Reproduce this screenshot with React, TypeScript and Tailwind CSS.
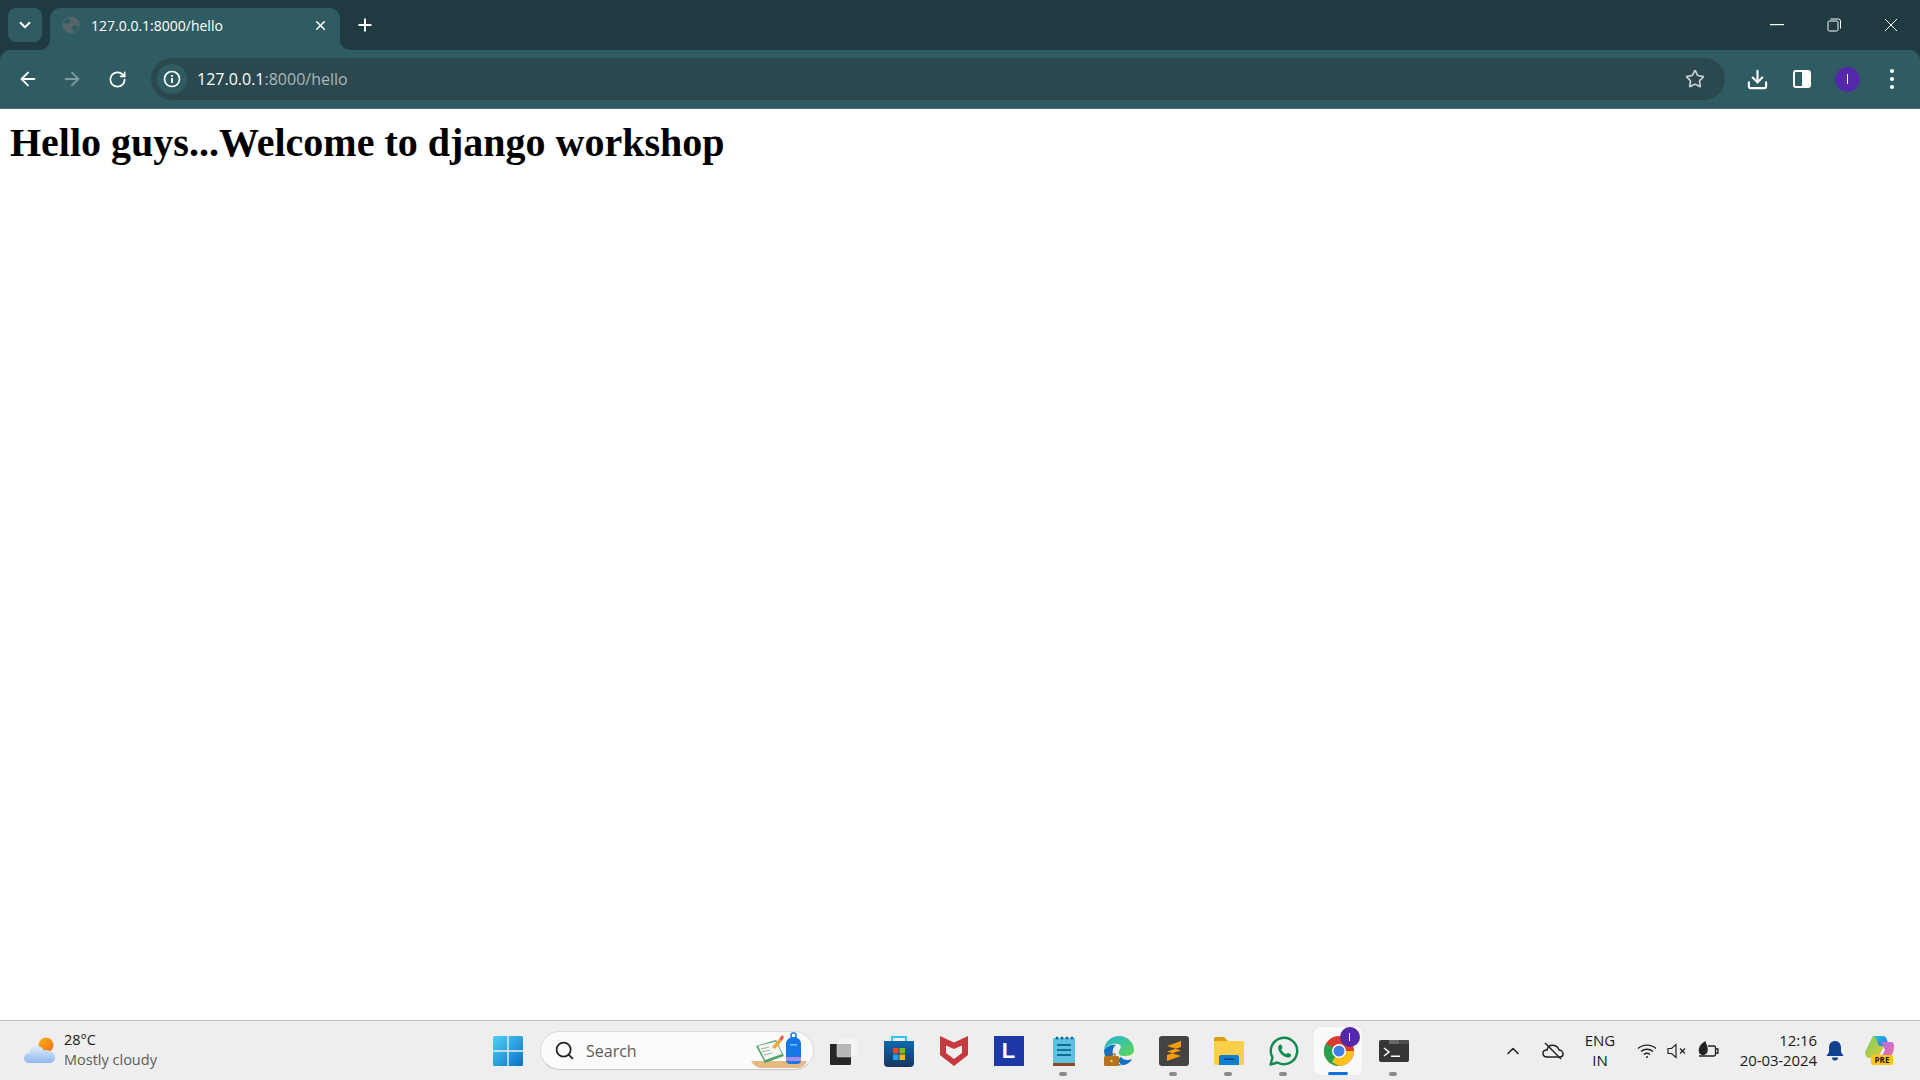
import { ChevronDown, ChevronUp, Plus, X, ArrowLeft, ArrowRight, RotateCw, Star, Download, Search } from 'lucide-react';
import type { ReactNode } from 'react';

const ui = 'font-["Open_Sans","Noto_Sans",sans-serif]';

function Flare({ side }: { side: 'left' | 'right' }) {
  return (
    <svg
      width="10"
      height="10"
      viewBox="0 0 10 10"
      className={`absolute bottom-0 ${side === 'left' ? 'left-[-10px]' : 'right-[-10px] -scale-x-100'}`}
    >
      <path d="M10 0V10H0A10 10 0 0 0 10 0Z" fill="#2f5c63" />
    </svg>
  );
}

function Globe() {
  return (
    <svg width="18" height="18" viewBox="0 0 18 18">
      <circle cx="9" cy="9" r="8.500" fill="#55666b" />
      <path d="M5 2 9 4 8 7 4 8 1.500 6ZM10 10l5-1 1.500 2-3.500 5-2-1Z" fill="#2f5c63" />
    </svg>
  );
}

function InfoIcon() {
  return (
    <svg width="18" height="18" viewBox="0 0 18 18" fill="none">
      <circle cx="9" cy="9" r="7.500" stroke="white" strokeWidth="1.700" />
      <rect x="8.100" y="8" width="1.800" height="5" fill="white" />
      <rect x="8.100" y="5" width="1.800" height="1.800" fill="white" />
    </svg>
  );
}

function TabStrip() {
  return (
    <div className="flex h-[50px] shrink-0 items-end bg-[#1f3a40] pl-2">
      <div className="mb-2 flex h-[34px] w-[34px] items-center justify-center rounded-lg bg-[#2f5c63]">
        <ChevronDown className="h-[18px] w-[18px] text-white" strokeWidth={2.500} />
      </div>
      <div className="relative ml-2 flex h-[42px] w-[290px] items-center rounded-t-[10px] bg-[#2f5c63] pr-[12px] pb-[8px] pl-[12px]">
        <Flare side="left" />
        <Flare side="right" />
        <Globe />
        <span className={`ml-[11px] flex-1 text-[14px] text-white ${ui}`}>127.0.0.1:8000/hello</span>
        <X className="h-[15px] w-[15px] text-white" strokeWidth={2.500} />
      </div>
      <div className="mb-[8px] ml-[8px] flex h-[34px] w-[34px] items-center justify-center">
        <Plus className="h-[20px] w-[20px] text-white" strokeWidth={2.400} />
      </div>
      <div className="ml-auto flex h-full items-start pr-[1px]">
        <div className="flex h-[50px] w-[57px] items-center justify-center">
          <svg width="14" height="2" viewBox="0 0 14 2">
            <rect width="14" height="1.200" fill="white" />
          </svg>
        </div>
        <div className="flex h-[50px] w-[57px] items-center justify-center">
          <svg width="14" height="14" viewBox="0 0 14 14" fill="none" stroke="white" strokeWidth="1">
            <rect x="1" y="3" width="10" height="10" rx="1.500" />
            <path d="M3.500 1H11.500A2 2 0 0 1 13.500 3V10.500" />
          </svg>
        </div>
        <div className="flex h-[50px] w-[57px] items-center justify-center">
          <svg width="14" height="14" viewBox="0 0 14 14" stroke="white" strokeWidth="1">
            <path d="M1 1 13 13M13 1 1 13" />
          </svg>
        </div>
      </div>
    </div>
  );
}

function Toolbar() {
  return (
    <div className="bg-[#1f3a40]">
      <div className="flex h-[59px] items-center rounded-t-[10px] border-b border-[#4a7379] bg-[#2f5c63] pl-[17px] pr-[12px]">
        <ArrowLeft className="h-[22px] w-[22px] text-white" strokeWidth={2} />
        <ArrowRight className="ml-[22px] h-[22px] w-[22px] text-[#7d9a9e]" strokeWidth={2} />
        <RotateCw className="ml-[25px] h-[19px] w-[19px] text-white" strokeWidth={2.200} />
        <div className="ml-[24px] flex h-[42px] w-[1574px] items-center rounded-full bg-[#2b484e] pl-[6px] pr-[20px]">
          <div className="flex h-[30px] w-[30px] items-center justify-center rounded-full bg-[#2f5c63]">
            <InfoIcon />
          </div>
          <span className={`ml-[10px] flex-1 text-[16px] text-white ${ui}`}>
            127.0.0.1<span className="text-[#a9b8bb]">:8000/hello</span>
          </span>
          <Star className="h-[20px] w-[20px] text-[#c9d1d3]" strokeWidth={2} />
        </div>
        <Download className="ml-[21px] h-[23px] w-[23px] text-white" strokeWidth={2.200} />
        <div className="ml-[24px] flex h-[18px] w-[18px] overflow-hidden rounded-[3px] border-2 border-white">
          <div className="w-[7px]" />
          <div className="flex-1 bg-white" />
        </div>
        <div className="ml-[24px] flex h-[25px] w-[25px] items-center justify-center rounded-full bg-[#5428a8]">
          <span className="h-[10px] w-px bg-white" />
        </div>
        <div className="ml-[30px] flex flex-col gap-[4px]">
          <span className="h-[4px] w-[4px] rounded-full bg-white" />
          <span className="h-[4px] w-[4px] rounded-full bg-white" />
          <span className="h-[4px] w-[4px] rounded-full bg-white" />
        </div>
      </div>
    </div>
  );
}

function WeatherIcon() {
  return (
    <svg width="32" height="28" viewBox="0 0 32 28">
      <defs>
        <linearGradient id="wsun" x1="0" y1="0" x2="1" y2="1">
          <stop offset="0" stopColor="#fbb321" />
          <stop offset="1" stopColor="#ee6f12" />
        </linearGradient>
        <linearGradient id="wcloud" x1="0" y1="0" x2="0" y2="1">
          <stop offset="0" stopColor="#e3edfb" />
          <stop offset="1" stopColor="#8fb8ef" />
        </linearGradient>
      </defs>
      <circle cx="22" cy="8" r="7.500" fill="url(#wsun)" />
      <path
        d="M5 26C2 26 0 23.500 0 21 0 18 2 16 5 15.500 6.500 11 10 8 14 9 17 9.500 19 11.500 20 13.500 22 13 25 13 27 14.500 30 15.500 31 18 31 20.500 31 23.500 29 26 26 26Z"
        fill="url(#wcloud)"
      />
    </svg>
  );
}

function WindowsLogo() {
  return (
    <svg width="30" height="30" viewBox="0 0 30 30">
      <defs>
        <linearGradient id="win" x1="0" y1="0" x2="1" y2="1">
          <stop offset="0" stopColor="#4fd2f8" />
          <stop offset="1" stopColor="#0a6fc4" />
        </linearGradient>
      </defs>
      <path d="M1.500 0H14.300V14.300H0V1.500A1.500 1.500 0 0 1 1.500 0ZM15.700 0H28.500A1.500 1.500 0 0 1 30 1.500V14.300H15.700ZM0 15.700H14.300V30H1.500A1.500 1.500 0 0 1 0 28.500ZM15.700 15.700H30V28.500A1.500 1.500 0 0 1 28.500 30H15.700Z" fill="url(#win)" />
    </svg>
  );
}

function SearchArt() {
  return (
    <svg width="60" height="38" viewBox="0 0 60 38" className="mr-[2px]">
      <path d="M0 29H56Q53 36 46 36H10Q4 36 0 29Z" fill="#e5b981" />
      <path d="M5 14 25 8 33 24 14 31Z" fill="#4fa368" />
      <path d="M7 14 25 9.500 31 22 14 28Z" fill="#f4f6f2" />
      <path d="M10 17 18 15M11 20 19 18M13 23 21 21" stroke="#9db3a6" strokeWidth="1" />
      <path d="M21 15 28 7 31 9 24 17Z" fill="#f2a73a" />
      <path d="M28 7 31 3 33 5 31 9Z" fill="#ef5a4d" />
      <path d="M35 12C35 8 38 5 42.500 5 47 5 50 8 50 12V28Q50 32 46 32H39Q35 32 35 28Z" fill="#1478ea" />
      <rect x="40" y="1" width="5" height="5" rx="2" fill="none" stroke="#1478ea" strokeWidth="1.500" />
      <rect x="35" y="25" width="15" height="4" fill="#a68be8" />
      <rect x="39" y="12" width="7" height="1.500" fill="#7bc0ff" />
    </svg>
  );
}

function TaskView() {
  return (
    <svg width="30" height="30" viewBox="0 0 30 30">
      <path d="M1 8H22V28Q22 29 21 29H2Q1 29 1 28Z" fill="#262626" />
      <rect x="8" y="1" width="22" height="20" rx="1" fill="#f5f5f5" fillOpacity="0.700" stroke="#e3e3e3" strokeWidth="0.500" />
    </svg>
  );
}

function StoreIcon() {
  return (
    <svg width="30" height="32" viewBox="0 0 30 32">
      <defs>
        <linearGradient id="store" x1="0" y1="0" x2="0" y2="1">
          <stop offset="0" stopColor="#0f68ad" />
          <stop offset="1" stopColor="#17355f" />
        </linearGradient>
      </defs>
      <path d="M8 6V2H22V6" fill="none" stroke="#2cc7ee" strokeWidth="2" />
      <path d="M0 6H30V28Q30 32 26 32H4Q0 32 0 28Z" fill="url(#store)" />
      <rect x="9" y="13" width="5.500" height="5.500" fill="#e8492f" />
      <rect x="15.500" y="13" width="5.500" height="5.500" fill="#7fba1f" />
      <rect x="9" y="19.500" width="5.500" height="5.500" fill="#1da3e8" />
      <rect x="15.500" y="19.500" width="5.500" height="5.500" fill="#fcb712" />
    </svg>
  );
}

function McAfeeIcon() {
  return (
    <svg width="28" height="30" viewBox="0 0 28 30">
      <path d="M0 0 14 6.500 28 0V19L14 30 0 19Z" fill="#c63a3f" />
      <path d="M6 9.500 14 13 22 9.500V17L14 23 6 17Z" fill="#eeeeee" />
    </svg>
  );
}

function LIcon() {
  return (
    <div className="relative flex h-[30px] w-[30px] items-center justify-center bg-[#1c39a7]">
      <span className='text-[22px] leading-none font-bold text-white font-["Liberation_Sans",sans-serif]'>L</span>
    </div>
  );
}

function NotepadIcon() {
  return (
    <svg width="22" height="30" viewBox="0 0 22 30">
      <rect x="0" y="2" width="22" height="26" rx="1" fill="#5fc1e2" />
      <rect x="0" y="27" width="22" height="3" fill="#8a4a22" />
      <circle cx="4" cy="2" r="1.500" fill="#0e6f93" />
      <circle cx="9" cy="2" r="1.500" fill="#0e6f93" />
      <circle cx="14" cy="2" r="1.500" fill="#0e6f93" />
      <circle cx="19" cy="2" r="1.500" fill="#0e6f93" />
      <path d="M4 9H18M4 14H18M4 19H18" stroke="#0e6f93" strokeWidth="2" />
    </svg>
  );
}

function EdgeIcon() {
  return (
    <svg width="30" height="30" viewBox="0 0 30 30">
      <defs>
        <linearGradient id="edgeg" x1="0" y1="0" x2="1" y2="1">
          <stop offset="0" stopColor="#1fb4dc" />
          <stop offset="1" stopColor="#62d84f" />
        </linearGradient>
      </defs>
      <path d="M0 14C1 5 8 0 15 0 24 0 30 7 30 14 30 19 25 20 20 20 16 20 14 18 15 15 17 12 18 9 14 8 8 7 3 10 0 14Z" fill="url(#edgeg)" />
      <path d="M0 14C3 10 8 8 12 9 9 11 8 15 9 20 10 25 14 28 18 29 9 31 0 25 0 14Z" fill="#1270c6" />
      <path d="M18 29C22 29 26 27 28 23 24 25 19 24 17 21 14 22 14 27 18 29Z" fill="#1270c6" />
      <rect x="0" y="20" width="15" height="10" rx="1.500" fill="#b7701b" />
      <path d="M4 20V18H11V20" fill="none" stroke="#8a5513" strokeWidth="1.200" />
      <rect x="6.500" y="24" width="2" height="2" fill="#f8d27a" />
    </svg>
  );
}

function SublimeIcon() {
  return (
    <svg width="30" height="30" viewBox="0 0 30 30">
      <rect width="30" height="30" rx="3" fill="#434343" />
      <path d="M22 5V11L8 15.500V10ZM22 14.500V20L8 25V19ZM8 15.500 22 20V14.500L8 10Z" fill="#fb9a0e" />
    </svg>
  );
}

function FolderIcon() {
  return (
    <svg width="30" height="28" viewBox="0 0 30 28">
      <path d="M0 2Q0 0 2 0H10L14 4H0Z" fill="#d9a012" />
      <path d="M0 4H28Q30 4 30 6V26Q30 28 28 28H2Q0 28 0 26Z" fill="#fbcf4a" />
      <path d="M5 20Q5 18 7 18H23Q25 18 25 20V28H5Z" fill="#0f7fd6" />
      <rect x="10" y="21.500" width="10" height="1.500" fill="#063f7d" />
    </svg>
  );
}

function WhatsAppIcon() {
  return (
    <svg width="30" height="30" viewBox="0 0 30 30" fill="none">
      <path d="M1.500 28.500 3.500 21.500A13.200 13.200 0 1 1 8.500 26.500Z" stroke="#138a4f" strokeWidth="2.400" strokeLinejoin="round" />
      <path d="M11 8.500C9 9.500 8.500 12 10 15 12 19 16 21.500 19.500 21.500 21.500 21.500 22.500 19.500 22 18.500L18.800 16.800 17.200 18.300C15 17.500 13 15.500 12.300 13.500L13.600 12 12.200 8.500Z" fill="#138a4f" />
    </svg>
  );
}

function ChromeIcon() {
  return (
    <svg width="30" height="30" viewBox="0 0 30 30">
      <circle cx="15" cy="15" r="15" fill="#dd3b2f" />
      <path d="M15 15 2 7.500A15 15 0 0 0 15 30Z" fill="#2aa24b" />
      <path d="M15 15H30A15 15 0 0 1 15 30L8 26Z" fill="#f9c21b" />
      <circle cx="15" cy="15" r="7" fill="white" />
      <circle cx="15" cy="15" r="5.500" fill="#3f7fe8" />
    </svg>
  );
}

function TerminalIcon() {
  return (
    <svg width="30" height="22" viewBox="0 0 30 22">
      <rect width="30" height="22" rx="2" fill="#363636" />
      <rect x="10" width="10" height="4" fill="#6a6a6a" />
      <rect x="20" width="10" height="4" rx="1" fill="#4d4d4d" />
      <path d="M5 8 10 12 5 16" fill="none" stroke="white" strokeWidth="1.500" />
      <rect x="12" y="15.500" width="9" height="1.500" fill="white" />
    </svg>
  );
}

function TaskIcon({ running, active, children }: { running?: boolean; active?: boolean; children: ReactNode }) {
  return (
    <div className="relative flex h-[48px] w-[55px] items-center justify-center">
      {active && (
        <>
          <div className="absolute top-0 left-[3px] h-[48px] w-[48px] rounded-[5px] bg-[#fafafa] shadow-[0_0_1px_#c9c9c9]" />
          <div className="absolute bottom-0 left-[17px] h-[3px] w-[20px] rounded-full bg-[#0f6fd8]" />
        </>
      )}
      <div className="relative">{children}</div>
      {running && <div className="absolute bottom-[-1px] left-[23px] h-[4px] w-[8px] rounded-full bg-[#8a8a8a]" />}
    </div>
  );
}

function Taskbar() {
  return (
    <div className={`flex h-[60px] shrink-0 items-center border-t border-[#bdbdbd] bg-[#eeeeee] ${ui}`}>
      <div className="flex w-[465px] items-center pl-[24px]">
        <WeatherIcon />
        <div className="ml-[8px] flex flex-col pb-[2px] text-[14.500px] leading-[20px]">
          <span className="text-[#1b1b1b]">28°C</span>
          <span className="text-[#5c5c5c]">Mostly cloudy</span>
        </div>
      </div>
      <div className="flex items-center">
        <div className="ml-[28px]">
          <WindowsLogo />
        </div>
        <div className="ml-[17px] flex h-[39px] w-[274px] items-center rounded-full border border-[#dcdcdc] border-b-[#c4c4c4] bg-[#fbfbfb] pl-[13px]">
          <Search className="h-[21px] w-[21px] text-[#222222]" strokeWidth={2} />
          <span className="ml-[11px] flex-1 text-[16px] text-[#5c5c5c]">Search</span>
          <SearchArt />
        </div>
        <div className="ml-[2px] flex items-center">
          <TaskIcon>
            <TaskView />
          </TaskIcon>
          <TaskIcon>
            <StoreIcon />
          </TaskIcon>
          <TaskIcon>
            <McAfeeIcon />
          </TaskIcon>
          <TaskIcon>
            <LIcon />
          </TaskIcon>
          <TaskIcon running>
            <NotepadIcon />
          </TaskIcon>
          <TaskIcon>
            <EdgeIcon />
          </TaskIcon>
          <TaskIcon running>
            <SublimeIcon />
          </TaskIcon>
          <TaskIcon running>
            <FolderIcon />
          </TaskIcon>
          <TaskIcon running>
            <WhatsAppIcon />
          </TaskIcon>
          <TaskIcon active>
            <ChromeIcon />
            <div className="absolute top-[-9px] left-[16px] flex h-[20px] w-[20px] items-center justify-center rounded-full bg-[#5428a8]">
              <span className="h-[8px] w-px bg-white" />
            </div>
          </TaskIcon>
          <TaskIcon running>
            <TerminalIcon />
          </TaskIcon>
        </div>
      </div>
      <div className="ml-auto flex items-center pr-[25px] text-[#1b1b1b]">
        <ChevronUp className="h-[20px] w-[20px]" strokeWidth={1.800} />
        <svg className="ml-[19px]" width="22" height="18" viewBox="0 0 22 18" fill="none" stroke="#222" strokeWidth="1.500">
          <path d="M5 15C2 15 1 13 1 11 1 9 3 7.500 5 8 6 4 9 3 12 3.500 15 4 16.500 6 17 8 19.500 8 21 10 21 12 21 14 19.500 15 18 15Z" />
          <path d="M3 1 19 17" />
        </svg>
        <div className="ml-[16px] flex w-[40px] flex-col items-center pb-[2px] text-[15px] leading-[20px]">
          <span>ENG</span>
          <span>IN</span>
        </div>
        <svg className="ml-[17px]" width="20" height="16" viewBox="0 0 20 16" fill="none" stroke="#222" strokeWidth="1.400">
          <path d="M1 5.500C6 1 14 1 19 5.500M4 8.500C7.500 5.500 12.500 5.500 16 8.500M7 11.500C8.800 10 11.200 10 13 11.500" />
          <circle cx="10" cy="14" r="1" fill="#222" stroke="none" />
        </svg>
        <svg className="ml-[10px]" width="20" height="16" viewBox="0 0 20 16" fill="none" stroke="#222" strokeWidth="1.200">
          <path d="M1 5.500H4.500L9 1.500V14.500L4.500 10.500H1Z" />
          <path d="M13 5.500 18 10.500M18 5.500 13 10.500" />
        </svg>
        <svg className="ml-[10px]" width="22" height="20" viewBox="0 0 22 20" fill="none" stroke="#222" strokeWidth="1.300">
          <path d="M11 5H17Q18.500 5 18.500 6.500V13.500Q18.500 15 17 15H2" />
          <path d="M19 8H21V12H19" />
          <path d="M3 12C1 7 5 3 8 1 9 5 12 8 9 12Q6 15 3 12Z" fill="#222" />
        </svg>
        <div className="ml-[18px] flex w-[80px] flex-col items-end pb-[2px] text-[15px] leading-[20px] tracking-[-0.1px]">
          <span>12:16</span>
          <span>20-03-2024</span>
        </div>
        <svg className="ml-[9px]" width="18" height="20" viewBox="0 0 18 20">
          <path d="M9 0C5 0 3 3 3 7V11L0.500 15H17.500L15 11V7C15 3 13 0 9 0Z" fill="#10418f" />
          <path d="M6 16.500H12A3 3 0 0 1 6 16.500Z" fill="#10418f" />
        </svg>
        <svg className="ml-[21px]" width="30" height="30" viewBox="0 0 30 30">
          <defs>
            <linearGradient id="cop1" x1="0" y1="0" x2="1" y2="1">
              <stop offset="0" stopColor="#25c4e8" />
              <stop offset="1" stopColor="#2b6fd8" />
            </linearGradient>
            <linearGradient id="cop2" x1="0" y1="0" x2="1" y2="1">
              <stop offset="0" stopColor="#6bd15a" />
              <stop offset="1" stopColor="#f2c53c" />
            </linearGradient>
            <linearGradient id="cop3" x1="0" y1="0" x2="1" y2="1">
              <stop offset="0" stopColor="#b56ce6" />
              <stop offset="1" stopColor="#f2709c" />
            </linearGradient>
          </defs>
          <path d="M8 0H18L21 6 13 22H5Q0 22 0 16Z" fill="url(#cop2)" />
          <path d="M9 0H18Q21 0 22 4L24 10H14L12 5Q11 1 9 0Z" fill="url(#cop1)" />
          <path d="M16 6H26Q29 6 29 10 29 18 24 22H16L20 14Z" fill="url(#cop3)" />
          <rect x="6" y="19" width="22" height="10" rx="2" fill="#fcc419" />
          <text x="17" y="27" textAnchor="middle" fontSize="8" fontWeight="700" fill="#1b1b1b" fontFamily="Open Sans">PRE</text>
        </svg>
      </div>
    </div>
  );
}

export default function App() {
  return (
    <div className="flex h-screen flex-col bg-white">
      <TabStrip />
      <Toolbar />
      <main className="min-h-0 flex-1 px-[10px]">
        <h1 className='mt-[11px] text-[40px] leading-[46px] font-bold text-black font-["Liberation_Serif","Times_New_Roman",serif]'>
          Hello guys...Welcome to django workshop
        </h1>
      </main>
      <Taskbar />
    </div>
  );
}
